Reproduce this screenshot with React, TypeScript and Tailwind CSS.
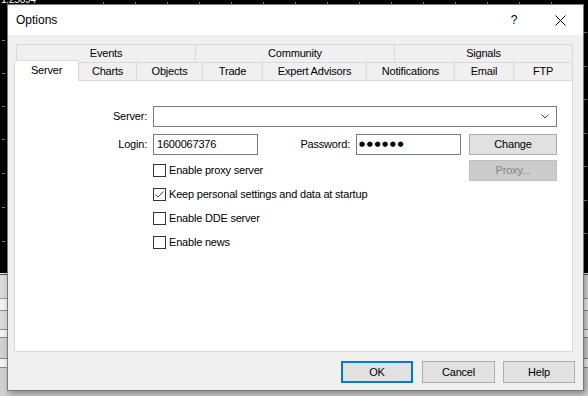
import React from "react";

const topTabs = [
  { label: "Events", w: "w-[179px]" },
  { label: "Community", w: "w-[199px]" },
  { label: "Signals", w: "w-[179px]" },
];

const bottomTabs = [
  { label: "Charts", w: "w-[58px]" },
  { label: "Objects", w: "w-[66px]" },
  { label: "Trade", w: "w-[60px]" },
  { label: "Expert Advisors", w: "w-[104px]" },
  { label: "Notifications", w: "w-[88px]" },
  { label: "Email", w: "w-[59px]" },
  { label: "FTP", w: "w-[59px]" },
];

const options = [
  { label: "Enable proxy server", checked: false },
  { label: "Keep personal settings and data at startup", checked: true },
  { label: "Enable DDE server", checked: false },
  { label: "Enable news", checked: false },
];

function Checkbox({ checked }: { checked: boolean }) {
  return (
    <div className="w-[13px] h-[13px] border border-[#333333] bg-white flex items-center justify-center shrink-0">
      {checked && (
        <svg width="11" height="11" viewBox="0 0 11 11" fill="none">
          <path d="M1.5 5.5L4 8L9.5 2.5" stroke="#4a4a4a" strokeWidth="1" />
        </svg>
      )}
    </div>
  );
}

function Backdrop() {
  const topTicks = [103, 135, 167, 199, 231, 263, 295, 327, 359, 391, 423, 455, 487, 519, 551];
  const leftTicks = [40, 73, 106, 139, 173, 207, 241];
  const rightTicks = [32, 66, 99, 133, 166, 200, 233];
  return (
    <div className="absolute inset-0 bg-black overflow-hidden">
      <span className="absolute left-[1px] top-[-6px] text-[10px] leading-[12px] text-white">1.25894</span>
      {topTicks.map((x) => (
        <div key={x} className="absolute top-[2px] w-px h-[2px] bg-[#808080]" style={{ left: x }} />
      ))}
      {leftTicks.map((y) => (
        <div key={y} className="absolute left-[2px] w-[3px] h-px bg-[#808080]" style={{ top: y }} />
      ))}
      {rightTicks.map((y) => (
        <div key={y} className="absolute right-[1px] w-[3px] h-px bg-[#808080]" style={{ top: y }} />
      ))}
      <div className="absolute left-0 right-0 top-[273px] bottom-0 flex flex-col">
        <div className="h-px bg-[#e8e8e8]" />
        <div className="h-px bg-[#505050]" />
        <div className="h-[23px] bg-[#d9d9d9]" />
        <div className="h-px bg-[#9a9a9a]" />
        <div className="h-[11px] bg-[#f2f2f2]" />
        <div className="h-px bg-[#8a8a8a]" />
        <div className="h-[18px] bg-[#d9d9d9]" />
        <div className="h-px bg-[#8a8a8a]" />
        <div className="h-[7px] bg-[#f2f2f2]" />
        <div className="h-px bg-[#8a8a8a]" />
        <div className="h-[20px] bg-[#d0d0d0]" />
        <div className="h-px bg-[#8a8a8a]" />
        <div className="h-[8px] bg-[#f2f2f2]" />
        <div className="h-px bg-[#8a8a8a]" />
        <div className="flex-1 bg-[#d0d0d0]" />
      </div>
    </div>
  );
}

export default function App() {
  return (
    <div className="relative w-[588px] h-[396px] overflow-hidden font-['Liberation_Sans',Arial,sans-serif] text-[11px] tracking-[-0.2px] text-black">
      <Backdrop />

      {/* dialog window */}
      <div className="absolute left-[7px] top-[4px] w-[577px] h-[387px] border border-[#7a7a7a] bg-[#f0f0f0] flex flex-col shadow-[2px_3px_6px_rgba(0,0,0,0.35)]">
        <div className="h-[30px] bg-white flex items-center shrink-0">
          <span className="pl-[8px] text-[12px] tracking-normal flex-1">Options</span>
          <div className="w-[46px] h-full flex items-center justify-center text-[12px]">?</div>
          <div className="w-[46px] h-full flex items-center justify-center">
            <svg width="11" height="11" viewBox="0 0 11 11">
              <path d="M0.5 0.5L10.5 10.5M10.5 0.5L0.5 10.5" stroke="#000" strokeWidth="1" />
            </svg>
          </div>
        </div>

        <div className="flex flex-col pl-[6px] pr-[10px] pt-[9px]">
          {/* tab rows */}
          <div className="flex ml-[2px] h-[18px]">
            {topTabs.map((t, i) => (
              <div
                key={t.label}
                className={`${t.w} h-[18px] border-t border-l border-[#d9d9d9] flex items-center justify-center ${i === topTabs.length - 1 ? "border-r" : ""}`}
              >
                {t.label}
              </div>
            ))}
          </div>
          <div className="flex h-[18px] items-start">
            <div className="relative z-10 w-[65px] h-[21px] -mt-[2px] bg-white border-t border-l border-r border-[#d9d9d9] flex items-center justify-center pb-[2px]">
              Server
            </div>
            {bottomTabs.map((t) => (
              <div
                key={t.label}
                className={`${t.w} h-[18px] border-t border-r border-[#d9d9d9] flex items-center justify-center`}
              >
                {t.label}
              </div>
            ))}
          </div>

          {/* panel */}
          <div className="h-[272px] bg-white border border-[#d9d9d9] pt-[25px] flex flex-col">
            <div className="flex items-center h-[21px]">
              <span className="w-[132px] text-right">Server:</span>
              <div className="ml-[6px] w-[404px] h-[21px] border border-[#7a7a7a] flex items-center justify-end pr-[7px]">
                <svg width="8" height="5" viewBox="0 0 8 5" fill="none">
                  <path d="M0.5 0.5L4 4L7.5 0.5" stroke="#444" strokeWidth="1" />
                </svg>
              </div>
            </div>

            <div className="flex items-center h-[21px] mt-[7px]">
              <span className="w-[132px] text-right">Login:</span>
              <div className="ml-[6px] w-[404px] flex items-center">
                <div className="w-[105px] h-[21px] border border-[#7a7a7a] flex items-center pl-[3px]">1600067376</div>
                <span className="flex-1 text-right pr-[6px]">Password:</span>
                <div className="w-[105px] h-[21px] border border-[#7a7a7a] flex items-center pl-[2px] font-['DejaVu_Sans',sans-serif] text-[7px] tracking-[1.6px]">
                  ●●●●●●
                </div>
                <button className="ml-[8px] w-[88px] h-[21px] bg-[#e1e1e1] border border-[#adadad] flex items-center justify-center">
                  Change
                </button>
              </div>
            </div>

            <div className="flex flex-col mt-[3px] ml-[138px] w-[404px]">
              {options.map((o, i) => (
                <div key={o.label} className="flex items-center h-[24px]">
                  <Checkbox checked={o.checked} />
                  <span className="ml-[3px] flex-1">{o.label}</span>
                  {i === 0 && (
                    <button className="w-[88px] h-[21px] bg-[#cccccc] border border-[#bfbfbf] text-[#838383] flex items-center justify-center">
                      Proxy...
                    </button>
                  )}
                </div>
              ))}
            </div>
          </div>

          {/* dialog buttons */}
          <div className="flex justify-end mt-[9px] mr-[-2px]">
            <button className="w-[72px] h-[22px] bg-[#e1e1e1] border-2 border-[#0078d7] flex items-center justify-center">
              OK
            </button>
            <button className="ml-[9px] w-[73px] h-[22px] bg-[#e1e1e1] border border-[#adadad] flex items-center justify-center">
              Cancel
            </button>
            <button className="ml-[8px] w-[72px] h-[22px] bg-[#e1e1e1] border border-[#adadad] flex items-center justify-center">
              Help
            </button>
          </div>
        </div>
      </div>
    </div>
  );
}
